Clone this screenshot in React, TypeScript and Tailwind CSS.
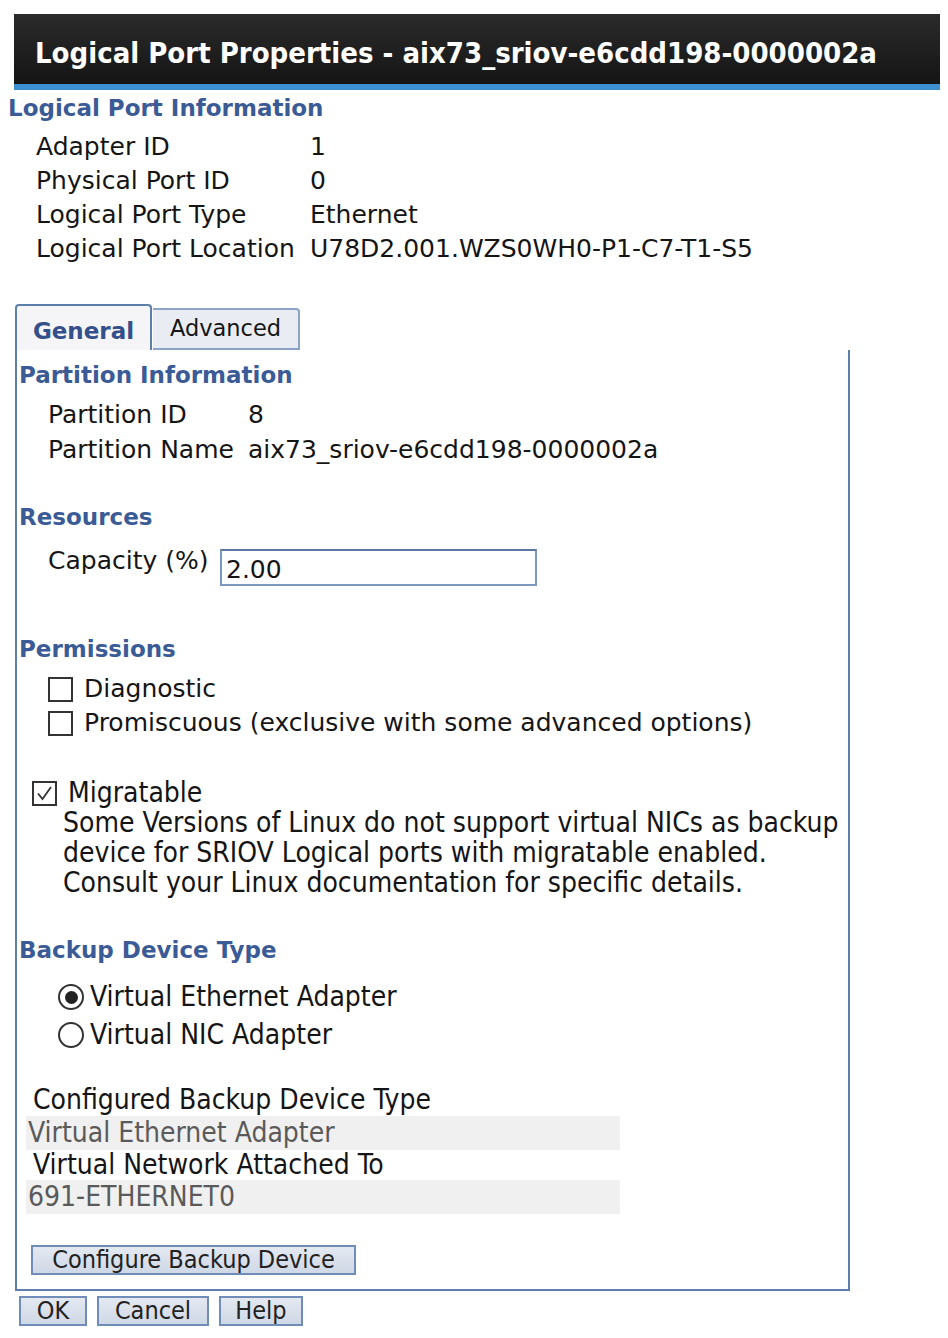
import React from "react"

const verdana = "font-['DejaVu_Sans',Verdana,sans-serif]"
const tahoma = "font-['DejaVu_Sans_Condensed','Liberation_Sans',sans-serif]"

const Heading = ({ children, className = "" }: { children: React.ReactNode; className?: string }) => (
  <div className={`h-[36px] flex items-center font-bold text-[23px] text-[#3b5b96] ${verdana} ${className}`}>{children}</div>
)

const CheckBox = ({ checked = false }: { checked?: boolean }) => (
  <span className="w-[25px] h-[25px] border-2 border-[#333] bg-white flex items-center justify-center shrink-0">
    {checked && (
      <svg width="19" height="19" viewBox="0 0 19 19">
        <path d="M3 9.5 L7.5 15 L16 3" fill="none" stroke="#333" strokeWidth="1.8" />
      </svg>
    )}
  </span>
)

const Radio = ({ checked = false }: { checked?: boolean }) => (
  <span className="w-[26px] h-[26px] rounded-full border-2 border-[#333] bg-white flex items-center justify-center shrink-0">
    {checked && <span className="w-[13px] h-[13px] rounded-full bg-[#222]" />}
  </span>
)

const Button = ({ children, className = "" }: { children: React.ReactNode; className?: string }) => (
  <div
    className={`h-[30px] border-2 border-[#6f8db8] bg-gradient-to-b from-[#e4e9f1] to-[#cfd8e6] flex items-center justify-center text-[25px] text-[#222] ${tahoma} ${className}`}
  >
    {children}
  </div>
)

const info = [
  ["Adapter ID", "1"],
  ["Physical Port ID", "0"],
  ["Logical Port Type", "Ethernet"],
  ["Logical Port Location", "U78D2.001.WZS0WH0-P1-C7-T1-S5"],
]

export default function App() {
  return (
    <div className={`w-[948px] h-[1338px] bg-white text-[#151515] pt-[14px] ${verdana}`}>
      <div className="ml-[14px] w-[926px] h-[76px] bg-gradient-to-b from-[#2b2b2b] to-[#151515] border-b-[6px] border-[#3d8fd0] flex items-center pl-[21px] pt-[10px]">
        <span className={`text-white font-bold text-[29px] ${tahoma}`}>
          Logical Port Properties - aix73_sriov-e6cdd198-0000002a
        </span>
      </div>

      <Heading className="ml-[8px]">Logical Port Information</Heading>
      <div className="mt-[4px] ml-[36px] text-[25px]">
        {info.map(([k, v]) => (
          <div key={k} className="h-[34px] flex items-center">
            <span className="w-[274px]">{k}</span>
            <span>{v}</span>
          </div>
        ))}
      </div>

      <div className="mt-[38px] ml-[15px] w-[835px]">
        <div className="flex h-[46px]">
          <div className="w-[137px] h-[46px] border-2 border-b-0 border-[#5f7fab] rounded-t-[4px] bg-[#f5f5f7] flex items-center justify-center pt-[6px] font-bold text-[23px] text-[#34508a]">
            General
          </div>
          <div className="mt-[4px] ml-[1px] w-[147px] h-[42px] border-2 border-l-0 border-[#8aa3c6] rounded-tr-[4px] bg-[#e9edf3] flex items-center justify-center text-[22.5px]">
            Advanced
          </div>
        </div>

        <div className="border-2 border-t-0 border-[#5f7fab] pl-[2px] pt-[7px] pb-[14px]">
          <Heading>Partition Information</Heading>
          <div className="mt-[4px] ml-[29px] text-[25px]">
            <div className="h-[35px] flex items-center">
              <span className="w-[200px]">Partition ID</span>
              <span>8</span>
            </div>
            <div className="h-[35px] flex items-center">
              <span className="w-[200px]">Partition Name</span>
              <span>aix73_sriov-e6cdd198-0000002a</span>
            </div>
          </div>

          <Heading className="mt-[32px]">Resources</Heading>
          <div className="mt-[14px] ml-[29px] flex items-start text-[25px]">
            <span className="leading-[24px] w-[172px]">Capacity (%)</span>
            <div className="w-[317px] h-[37px] border-2 border-[#7d98bf] border-t-[#5d78a0] bg-white flex items-center pl-[4px] pt-[4px]">
              2.00
            </div>
          </div>

          <Heading className="mt-[45px]">Permissions</Heading>
          <div className="mt-[5px] ml-[29px] text-[25px]">
            <div className="h-[34px] flex items-center gap-[11px]">
              <CheckBox />
              <span>Diagnostic</span>
            </div>
            <div className="h-[34px] flex items-center gap-[11px]">
              <CheckBox />
              <span>Promiscuous (exclusive with some advanced options)</span>
            </div>
          </div>

          <div className={`mt-[38px] ml-[13px] text-[28px] ${tahoma}`}>
            <div className="h-[30px] flex items-center gap-[11px]">
              <CheckBox checked />
              <span>Migratable</span>
            </div>
            <div className="ml-[31px] leading-[30px]">
              Some Versions of Linux do not support virtual NICs as backup
              <br />
              device for SRIOV Logical ports with migratable enabled.
              <br />
              Consult your Linux documentation for specific details.
            </div>
          </div>

          <Heading className="mt-[34px]">Backup Device Type</Heading>
          <div className={`mt-[10px] ml-[39px] text-[28px] ${tahoma}`}>
            <div className="h-[38px] flex items-center gap-[6px]">
              <Radio checked />
              <span>Virtual Ethernet Adapter</span>
            </div>
            <div className="h-[38px] flex items-center gap-[6px]">
              <Radio />
              <span>Virtual NIC Adapter</span>
            </div>
          </div>

          <div className={`mt-[30px] ml-[7px] text-[28px] ${tahoma}`}>
            <div className="h-[32px] flex items-center ml-[7px]">Configured Backup Device Type</div>
            <div className="w-[594px] h-[34px] bg-[#f0f0f0] flex items-center pl-[2px] text-[#5a5a5a]">
              Virtual Ethernet Adapter
            </div>
            <div className="h-[30px] flex items-center ml-[7px]">Virtual Network Attached To</div>
            <div className="w-[594px] h-[34px] bg-[#f0f0f0] flex items-center pl-[2px] text-[#5a5a5a]">
              691-ETHERNET0
            </div>
          </div>

          <Button className="mt-[31px] ml-[12px] w-[325px]">Configure Backup Device</Button>
        </div>
      </div>

      <div className="mt-[5px] ml-[19px] flex gap-[10px]">
        <Button className="w-[68px]">OK</Button>
        <Button className="w-[112px]">Cancel</Button>
        <Button className="w-[84px]">Help</Button>
      </div>
    </div>
  )
}
